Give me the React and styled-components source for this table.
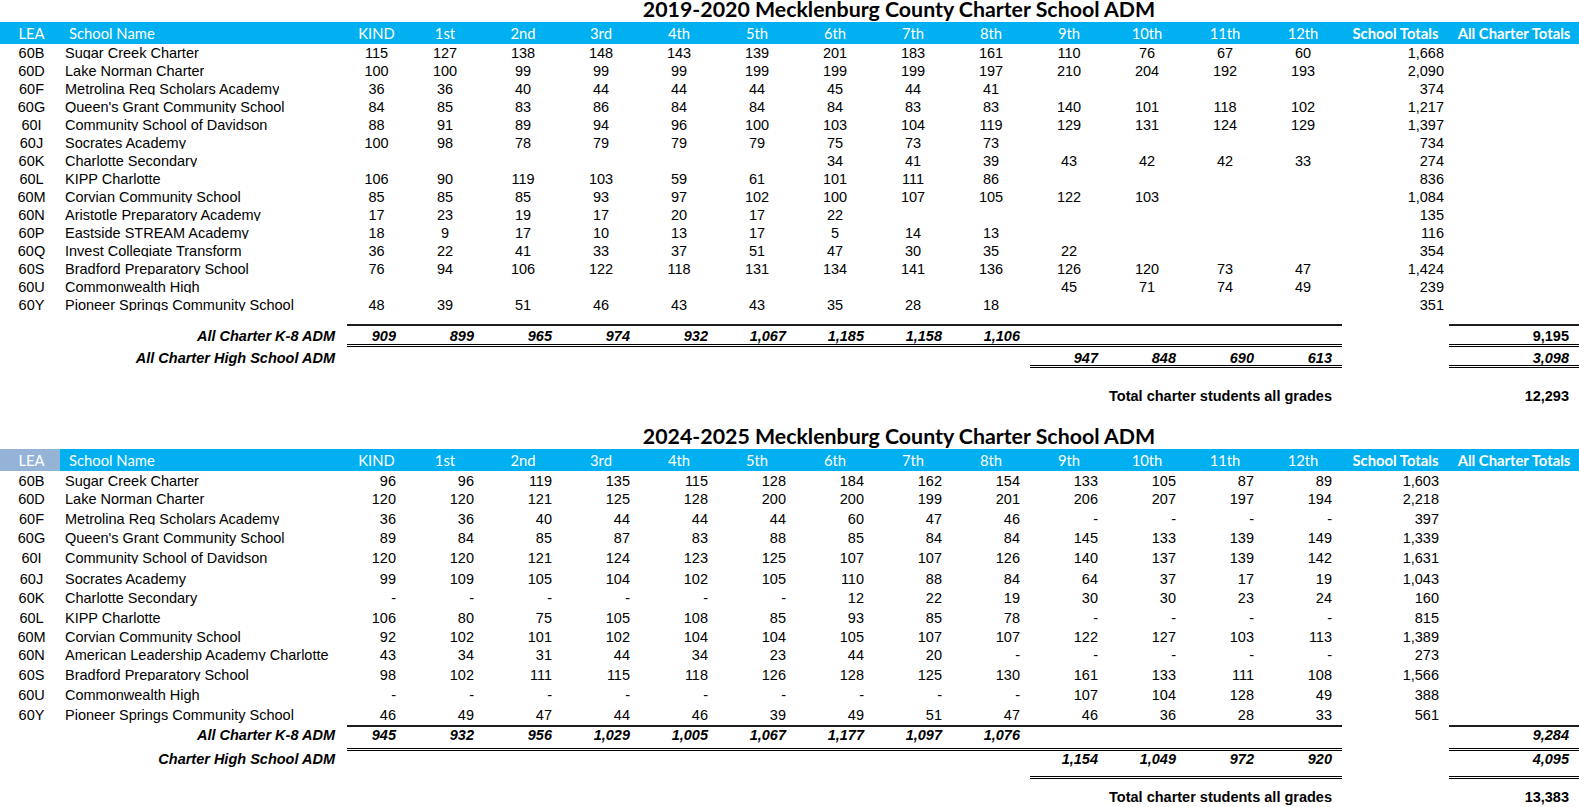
import React from 'react';
import styled, { createGlobalStyle } from 'styled-components';

const GlobalStyle = createGlobalStyle`
  html, body { margin: 0; padding: 0; background: #fff; overflow: hidden; }
  body { font-family: "Liberation Sans", Arial, sans-serif; color: #000; }
`;

const COLS = '60px 287px 59px repeat(12, 78px) 107px 130px';
const HEAD_FONT = 'Lato, Carlito, Calibri, sans-serif';

const Page = styled.div`
  width: 1579px;
  display: flex;
  flex-direction: column;
`;

const Sheet = styled.section`
  display: flex;
  flex-direction: column;
  margin-top: ${p => p.$mt || 0}px;
`;

const Title = styled.div`
  height: 22px;
  line-height: 18px;
  padding-left: 219px;
  text-align: center;
  font-family: ${HEAD_FONT};
  font-weight: 700;
  font-size: 21.33px;
  white-space: nowrap;
`;

const HeaderRow = styled.div`
  display: grid;
  grid-template-columns: ${COLS};
  height: 22px;
  background: #00b0f0;
`;

const HeadCell = styled.div`
  line-height: 22px;
  font-family: ${HEAD_FONT};
  font-size: 14.8px;
  font-weight: ${p => (p.$bold ? 700 : 400)};
  color: #fff;
  white-space: nowrap;
  text-align: ${p => (p.$left ? 'left' : 'center')};
  padding-left: ${p => p.$pl || 0}px;
  background: ${p => p.$bg || 'transparent'};
`;

const DataRow = styled.div`
  display: grid;
  grid-template-columns: ${COLS};
  height: ${p => p.$h}px;
  font-size: 14.5px;
`;

const Cell = styled.div`
  height: ${p => p.$h}px;
  display: flex;
  align-items: flex-end;
  justify-content: ${p =>
    p.$align === 'left' ? 'flex-start' : p.$align === 'center' ? 'center' : 'flex-end'};
  padding: 0 ${p => p.$pr || 0}px 0 ${p => p.$pl || 0}px;
`;

const Txt = styled.span`
  display: block;
  line-height: 18px;
  height: ${p => (p.$clip ? 15 : 18)}px;
  margin-bottom: ${p => (p.$clip ? 3 : 0)}px;
  overflow: ${p => (p.$clip ? 'hidden' : 'visible')};
  white-space: nowrap;
`;

const Spacer = styled.div`
  height: ${p => p.$h}px;
`;

const SumRow = styled.div`
  display: grid;
  grid-template-columns: ${COLS};
  font-size: 14.5px;
  font-weight: 700;
`;

const SumLabel = styled.div`
  grid-column: 1 / 3;
  height: ${p => p.$h - p.$pt}px;
  padding: ${p => p.$pt}px 12px 0 0;
  line-height: ${p => p.$lh}px;
  border-top: ${p => p.$tw}px solid transparent;
  border-bottom: 3px double transparent;
  text-align: right;
  font-style: italic;
  white-space: nowrap;
`;

const SumCell = styled.div`
  height: ${p => p.$h - p.$pt}px;
  padding: ${p => p.$pt}px 10px 0 0;
  line-height: ${p => p.$lh}px;
  border-top: ${p => p.$tw}px solid ${p => (p.$top ? '#1e1e1e' : 'transparent')};
  border-bottom: 3px double ${p => (p.$bot ? '#000' : 'transparent')};
  text-align: right;
  font-style: ${p => (p.$upright ? 'normal' : 'italic')};
  white-space: nowrap;
`;

const TotalRow = styled.div`
  display: grid;
  grid-template-columns: ${COLS};
  margin-top: ${p => p.$mt}px;
  height: 18px;
  line-height: 18px;
  font-size: 14.5px;
  font-weight: 700;
`;

const TotalLabel = styled.div`
  grid-column: 3 / 16;
  text-align: right;
  padding-right: 10px;
  white-space: nowrap;
`;

const TotalValue = styled.div`
  grid-column: 17 / 18;
  text-align: right;
  padding-right: 10px;
`;

const GRADES = ['KIND', '1st', '2nd', '3rd', '4th', '5th', '6th', '7th', '8th', '9th', '10th', '11th', '12th'];

const T1 = [
  ['60B', 'Sugar Creek Charter', '115 127 138 148 143 139 201 183 161 110 76 67 60', '1,668'],
  ['60D', 'Lake Norman Charter', '100 100 99 99 99 199 199 199 197 210 204 192 193', '2,090'],
  ['60F', 'Metrolina Reg Scholars Academy', '36 36 40 44 44 44 45 44 41 _ _ _ _', '374'],
  ['60G', "Queen's Grant Community School", '84 85 83 86 84 84 84 83 83 140 101 118 102', '1,217'],
  ['60I', 'Community School of Davidson', '88 91 89 94 96 100 103 104 119 129 131 124 129', '1,397'],
  ['60J', 'Socrates Academy', '100 98 78 79 79 79 75 73 73 _ _ _ _', '734'],
  ['60K', 'Charlotte Secondary', '_ _ _ _ _ _ 34 41 39 43 42 42 33', '274'],
  ['60L', 'KIPP Charlotte', '106 90 119 103 59 61 101 111 86 _ _ _ _', '836'],
  ['60M', 'Corvian Community School', '85 85 85 93 97 102 100 107 105 122 103 _ _', '1,084'],
  ['60N', 'Aristotle Preparatory Academy', '17 23 19 17 20 17 22 _ _ _ _ _ _', '135'],
  ['60P', 'Eastside STREAM Academy', '18 9 17 10 13 17 5 14 13 _ _ _ _', '116'],
  ['60Q', 'Invest Collegiate Transform', '36 22 41 33 37 51 47 30 35 22 _ _ _', '354'],
  ['60S', 'Bradford Preparatory School', '76 94 106 122 118 131 134 141 136 126 120 73 47', '1,424'],
  ['60U', 'Commonwealth High', '_ _ _ _ _ _ _ _ _ 45 71 74 49', '239'],
  ['60Y', 'Pioneer Springs Community School', '48 39 51 46 43 43 35 28 18 _ _ _ _', '351'],
].map(([lea, name, g, tot]) => ({ lea, name, grades: g.split(' ').map(v => (v === '_' ? '' : v)), tot, h: 18, clip: true }));

const T2 = [
  ['60B', 'Sugar Creek Charter', '96 96 119 135 115 128 184 162 154 133 105 87 89', '1,603', 19, 0],
  ['60D', 'Lake Norman Charter', '120 120 121 125 128 200 200 199 201 206 207 197 194', '2,218', 18, 0],
  ['60F', 'Metrolina Reg Scholars Academy', '36 36 40 44 44 44 60 47 46 - - - -', '397', 20, 1],
  ['60G', "Queen's Grant Community School", '89 84 85 87 83 88 85 84 84 145 133 139 149', '1,339', 19, 0],
  ['60I', 'Community School of Davidson', '120 120 121 124 123 125 107 107 126 140 137 139 142', '1,631', 20, 1],
  ['60J', 'Socrates Academy', '99 109 105 104 102 105 110 88 84 64 37 17 19', '1,043', 21, 0],
  ['60K', 'Charlotte Secondary', '- - - - - - 12 22 19 30 30 23 24', '160', 19, 0],
  ['60L', 'KIPP Charlotte', '106 80 75 105 108 85 93 85 78 - - - -', '815', 20, 0],
  ['60M', 'Corvian Community School', '92 102 101 102 104 104 105 107 107 122 127 103 113', '1,389', 19, 1],
  ['60N', 'American Leadership Academy Charlotte', '43 34 31 44 34 23 44 20 - - - - -', '273', 18, 1],
  ['60S', 'Bradford Preparatory School', '98 102 111 115 118 126 128 125 130 161 133 111 108', '1,566', 20, 1],
  ['60U', 'Commonwealth High', '- - - - - - - - - 107 104 128 49', '388', 20, 0],
  ['60Y', 'Pioneer Springs Community School', '46 49 47 44 46 39 49 51 47 46 36 28 33', '561', 20, 0],
].map(([lea, name, g, tot, h, clip]) => ({ lea, name, grades: g.split(' '), tot, h, clip: !!clip }));

const SHEETS = [
  {
    title: '2019-2020 Mecklenburg County Charter School ADM',
    rows: T1,
    numAlign: 'center',
    numPr: 0,
    totPr: 5,
    leaBg: null,
    mt: 0,
    gap: 10,
    k8: { vals: '909 899 965 974 932 1,067 1,185 1,158 1,106'.split(' '), total: '9,195', upright: true, h: 18, pt: 1, lh: 18, tw: 2 },
    hs: { label: 'All Charter High School ADM', vals: '947 848 690 613'.split(' '), total: '3,098', h: 18, pt: 2, lh: 18 },
    grand: '12,293',
    grandMt: 19,
  },
  {
    title: '2024-2025 Mecklenburg County Charter School ADM',
    rows: T2,
    numAlign: 'right',
    numPr: 10,
    totPr: 10,
    leaBg: '#95b3d7',
    mt: 22,
    gap: 1,
    k8: { vals: '945 932 956 1,029 1,005 1,067 1,177 1,097 1,076'.split(' '), total: '9,284', upright: false, h: 21, pt: 0, lh: 16, tw: 2 },
    hs: { label: 'Charter High School ADM', vals: '1,154 1,049 972 920'.split(' '), total: '4,095', h: 25, pt: 0, lh: 16 },
    grand: '13,383',
    grandMt: 9,
  },
];

function SheetView({ s }) {
  const { k8, hs } = s;
  return (
    <Sheet $mt={s.mt}>
      <Title>{s.title}</Title>
      <HeaderRow>
        <HeadCell $bg={s.leaBg} $pl={3}>LEA</HeadCell>
        <HeadCell $left $pl={9}>School Name</HeadCell>
        {GRADES.map(g => (
          <HeadCell key={g}>{g}</HeadCell>
        ))}
        <HeadCell $bold>School Totals</HeadCell>
        <HeadCell $bold>All Charter Totals</HeadCell>
      </HeaderRow>
      {s.rows.map(r => (
        <DataRow key={r.lea} $h={r.h}>
          <Cell $h={r.h} $align="center" $pl={3}>
            <Txt>{r.lea}</Txt>
          </Cell>
          <Cell $h={r.h} $align="left" $pl={5}>
            <Txt $clip={r.clip}>{r.name}</Txt>
          </Cell>
          {r.grades.map((v, i) => (
            <Cell key={i} $h={r.h} $align={s.numAlign} $pr={s.numPr}>
              <Txt>{v}</Txt>
            </Cell>
          ))}
          <Cell $h={r.h} $align="right" $pr={s.totPr}>
            <Txt>{r.tot}</Txt>
          </Cell>
          <Cell $h={r.h} />
        </DataRow>
      ))}
      <Spacer $h={s.gap} />
      <SumRow>
        <SumLabel $h={k8.h} $pt={k8.pt} $lh={k8.lh} $tw={k8.tw}>All Charter K-8 ADM</SumLabel>
        {GRADES.map((g, i) => (
          <SumCell key={g} $h={k8.h} $pt={k8.pt} $lh={k8.lh} $tw={k8.tw} $top $bot>
            {k8.vals[i] || ''}
          </SumCell>
        ))}
        <SumCell $h={k8.h} $pt={k8.pt} $lh={k8.lh} $tw={k8.tw} />
        <SumCell $h={k8.h} $pt={k8.pt} $lh={k8.lh} $tw={k8.tw} $top $bot $upright={k8.upright}>
          {k8.total}
        </SumCell>
      </SumRow>
      <SumRow>
        <SumLabel $h={hs.h} $pt={hs.pt} $lh={hs.lh} $tw={0}>{hs.label}</SumLabel>
        {GRADES.map((g, i) => (
          <SumCell key={g} $h={hs.h} $pt={hs.pt} $lh={hs.lh} $tw={0} $bot={i >= 9}>
            {i >= 9 ? hs.vals[i - 9] : ''}
          </SumCell>
        ))}
        <SumCell $h={hs.h} $pt={hs.pt} $lh={hs.lh} $tw={0} />
        <SumCell $h={hs.h} $pt={hs.pt} $lh={hs.lh} $tw={0} $bot>
          {hs.total}
        </SumCell>
      </SumRow>
      <TotalRow $mt={s.grandMt}>
        <TotalLabel>Total charter students all grades</TotalLabel>
        <TotalValue>{s.grand}</TotalValue>
      </TotalRow>
    </Sheet>
  );
}

export default function App() {
  return (
    <>
      <GlobalStyle />
      <Page>
        {SHEETS.map(s => (
          <SheetView key={s.title} s={s} />
        ))}
      </Page>
    </>
  );
}
